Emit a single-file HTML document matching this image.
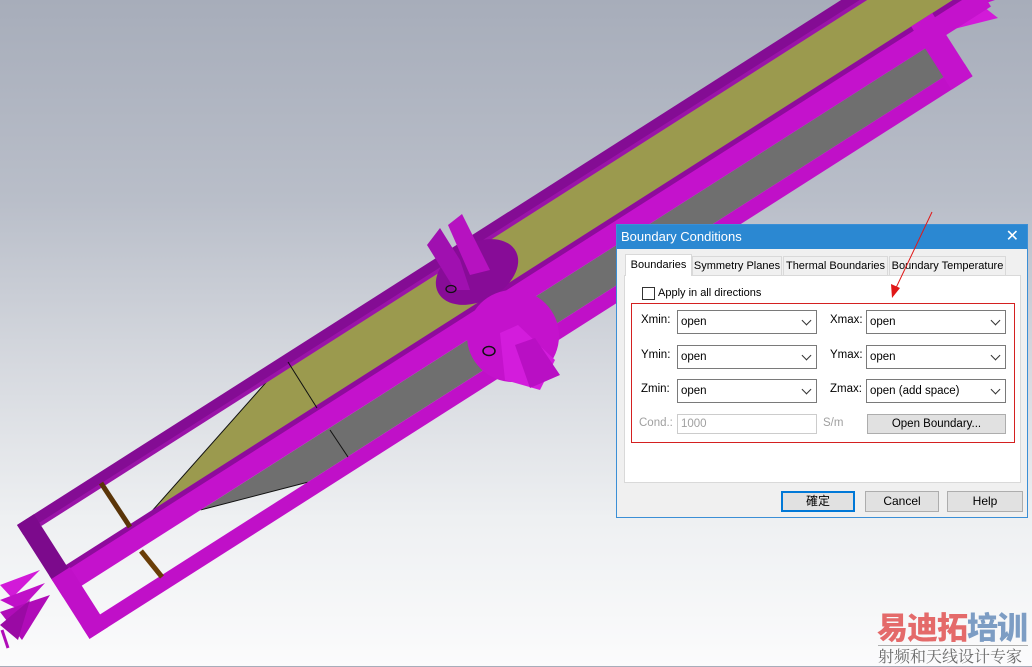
<!DOCTYPE html>
<html><head><meta charset="utf-8"><style>
html,body{margin:0;padding:0}
body{width:1032px;height:666px;position:relative;overflow:hidden;font-family:"Liberation Sans","Noto Sans CJK TC",sans-serif;background:linear-gradient(180deg,#a7adba 0%,#b9bec9 30%,#d6d9df 55%,#eef0f2 78%,#fbfbfc 100%)}
svg.scene{position:absolute;left:0;top:0}
.dlg{position:absolute;left:616px;top:224px;width:412px;height:294px;background:#f0f0f0;border:1px solid #3b8fd6;box-sizing:border-box;font-size:12px;color:#000}
.title{height:24px;background:#2b88d2;color:#fff;font-size:13px;line-height:24px;padding-left:4px}
.title .x{position:absolute;right:8px;top:0;font-size:16px}
.tab{position:absolute;top:31px;height:19px;line-height:19px;background:#f0f0f0;border:1px solid #d9d9d9;border-bottom:none;font-size:11px;text-align:center;box-sizing:border-box;white-space:nowrap;overflow:hidden}
.tab.sel{background:#fff;top:29px;height:22px;line-height:20px;border-color:#d9d9d9}
.panel{position:absolute;left:7px;top:50px;width:397px;height:208px;background:#fff;border:1px solid #d9d9d9;box-sizing:border-box}
.a{position:absolute}
.combo{position:absolute;width:140px;height:24px;border:1px solid #7a7a7a;box-sizing:border-box;background:#fff;line-height:22px;padding-left:3px;font-size:11.5px;white-space:nowrap}
.combo:after{content:"";position:absolute;right:6px;top:6px;width:6px;height:6px;border-right:1px solid #333;border-bottom:1px solid #333;transform:rotate(45deg)}
.lbl{position:absolute;font-size:11.5px;white-space:nowrap}
.btn{position:absolute;height:21px;border:1px solid #adadad;background:#e1e1e1;box-sizing:border-box;text-align:center;line-height:19px;font-size:12px;white-space:nowrap}
</style></head><body>
<svg class="scene" width="1032" height="666" viewBox="0 0 1032 666">
<polygon points="0,585 40,570 12,598" fill="#d21ad8"/>
<polygon points="0,600 45,583 20,610" fill="#c010c8"/>
<polygon points="0,612 50,595 22,640" fill="#b00cb8"/>
<polygon points="0,625 30,600 18,640" fill="#9a0aa4"/>
<line x1="2" y1="630" x2="8" y2="648" stroke="#b00cb8" stroke-width="3"/>
<polygon points="930,5 975,0 998,18 950,30" fill="#d21ad8"/>
<polygon points="935,0 970,0 945,14" fill="#8a0a95"/>
<polygon points="955,0 995,0 960,12" fill="#c010c8"/>
<g transform="translate(17,525) rotate(-32.5)">
 <polygon points="110,64 292,12 1100,12 1100,64" fill="#9b9a4e"/>
 <polygon points="163,86 268,120 1025,120 1025,86" fill="#6f6f6f"/>
 <line x1="110" y1="64" x2="292" y2="12" stroke="#111" stroke-width="1"/>
 <line x1="163" y1="86" x2="268" y2="120" stroke="#111" stroke-width="1"/>
 <rect x="0" y="0" width="1100" height="12" fill="#840c94"/>
 <rect x="20" y="10" width="1080" height="4" fill="#9a14a8"/>
 <rect x="0" y="60" width="1100" height="6" fill="#8e0b9c"/>
 <rect x="0" y="65" width="1100" height="21" fill="#c412cc"/>
 <rect x="0" y="120" width="1047" height="15" fill="#c010c8"/>
 <rect x="0" y="0" width="20" height="66" fill="#7c0a8c"/>
 <rect x="0" y="64" width="22" height="71" fill="#c010c8"/>
 <rect x="1022" y="60" width="25" height="75" fill="#c412cc"/>
</g>
<line x1="288" y1="362" x2="317" y2="408" stroke="#111" stroke-width="1"/>
<line x1="330" y1="430" x2="348" y2="457" stroke="#111" stroke-width="1"/>
<line x1="101" y1="483" x2="130" y2="527" stroke="#5a3508" stroke-width="5"/>
<line x1="141" y1="551" x2="162" y2="577" stroke="#6a3e08" stroke-width="5"/>
<ellipse cx="477" cy="272" rx="44" ry="29" transform="rotate(-28 477 272)" fill="#870c97"/>
<polygon points="427,245 440,228 460,260 470,290 455,290" fill="#a010b0"/>
<polygon points="448,225 462,214 475,240 490,270 470,275" fill="#b612c0"/>
<ellipse cx="451" cy="289" rx="5" ry="3.5" fill="none" stroke="#111" stroke-width="1.3"/>
<circle cx="513" cy="336" r="46" fill="#c412cc"/>
<polygon points="500,333 518,325 555,360 540,390 505,380" fill="#d31cdc"/>
<polygon points="515,345 535,338 560,375 530,388" fill="#b90fc4"/>
<ellipse cx="489" cy="351" rx="6" ry="4.5" fill="none" stroke="#111" stroke-width="1.5"/>
</svg>

<div class="dlg">
 <div class="title">Boundary Conditions<span class="x">✕</span></div>
 <div class="panel"></div>
 <div class="tab sel" style="left:8px;width:67px">Boundaries</div>
 <div class="tab" style="left:75px;width:90px">Symmetry Planes</div>
 <div class="tab" style="left:166px;width:105px">Thermal Boundaries</div>
 <div class="tab" style="left:272px;width:117px">Boundary Temperature</div>
 <div class="a" style="left:25px;top:62px;width:11px;height:11px;border:1px solid #333;background:#fff"></div>
 <div class="lbl" style="left:41px;top:62px;font-size:11px">Apply in all directions</div>
 <div class="a" style="left:14px;top:78px;width:384px;height:140px;border:1px solid #d42020;box-sizing:border-box"></div>
 <div class="lbl" style="left:24px;top:89px">Xmin:</div>
 <div class="combo" style="left:60px;top:85px">open</div>
 <div class="lbl" style="left:213px;top:89px">Xmax:</div>
 <div class="combo" style="left:249px;top:85px">open</div>
 <div class="lbl" style="left:24px;top:124px">Ymin:</div>
 <div class="combo" style="left:60px;top:120px">open</div>
 <div class="lbl" style="left:213px;top:124px">Ymax:</div>
 <div class="combo" style="left:249px;top:120px">open</div>
 <div class="lbl" style="left:24px;top:158px">Zmin:</div>
 <div class="combo" style="left:60px;top:154px">open</div>
 <div class="lbl" style="left:213px;top:158px">Zmax:</div>
 <div class="combo" style="left:249px;top:154px">open (add space)</div>
 <div class="lbl" style="left:22px;top:192px;color:#a0a0a0">Cond.:</div>
 <div class="a" style="left:60px;top:189px;width:140px;height:20px;border:1px solid #ccc;box-sizing:border-box;color:#a0a0a0;line-height:18px;padding-left:3px;font-size:11.5px">1000</div>
 <div class="lbl" style="left:206px;top:192px;color:#a0a0a0">S/m</div>
 <div class="btn" style="left:250px;top:189px;width:139px;height:20px;line-height:18px;font-size:11.5px">Open Boundary...</div>
 <div class="btn" style="left:164px;top:266px;width:74px;border:2px solid #0078d7;line-height:17px">確定</div>
 <div class="btn" style="left:248px;top:266px;width:74px">Cancel</div>
 <div class="btn" style="left:330px;top:266px;width:76px">Help</div>
</div>

<svg class="scene" width="1032" height="666" viewBox="0 0 1032 666">
<line x1="932" y1="212" x2="895" y2="290" stroke="#e01818" stroke-width="1"/>
<polygon points="892,298 891,284 900,288" fill="#e01818"/>
</svg>

<div class="a" style="left:877px;top:608px;font-family:'Noto Sans CJK SC',sans-serif;font-weight:900;font-size:31px;line-height:36px;letter-spacing:-1px;white-space:nowrap"><span style="color:#e46a6a">易迪拓</span><span style="color:#7d9dc4">培训</span></div>
<div class="a" style="left:878px;top:645px;width:150px;height:1px;background:#b0b0b0"></div>
<div class="a" style="left:878px;top:646px;font-family:'Noto Serif CJK SC',serif;font-size:16px;line-height:20px;color:#6a6a6a;white-space:nowrap">射频和天线设计专家</div>
</body></html>
